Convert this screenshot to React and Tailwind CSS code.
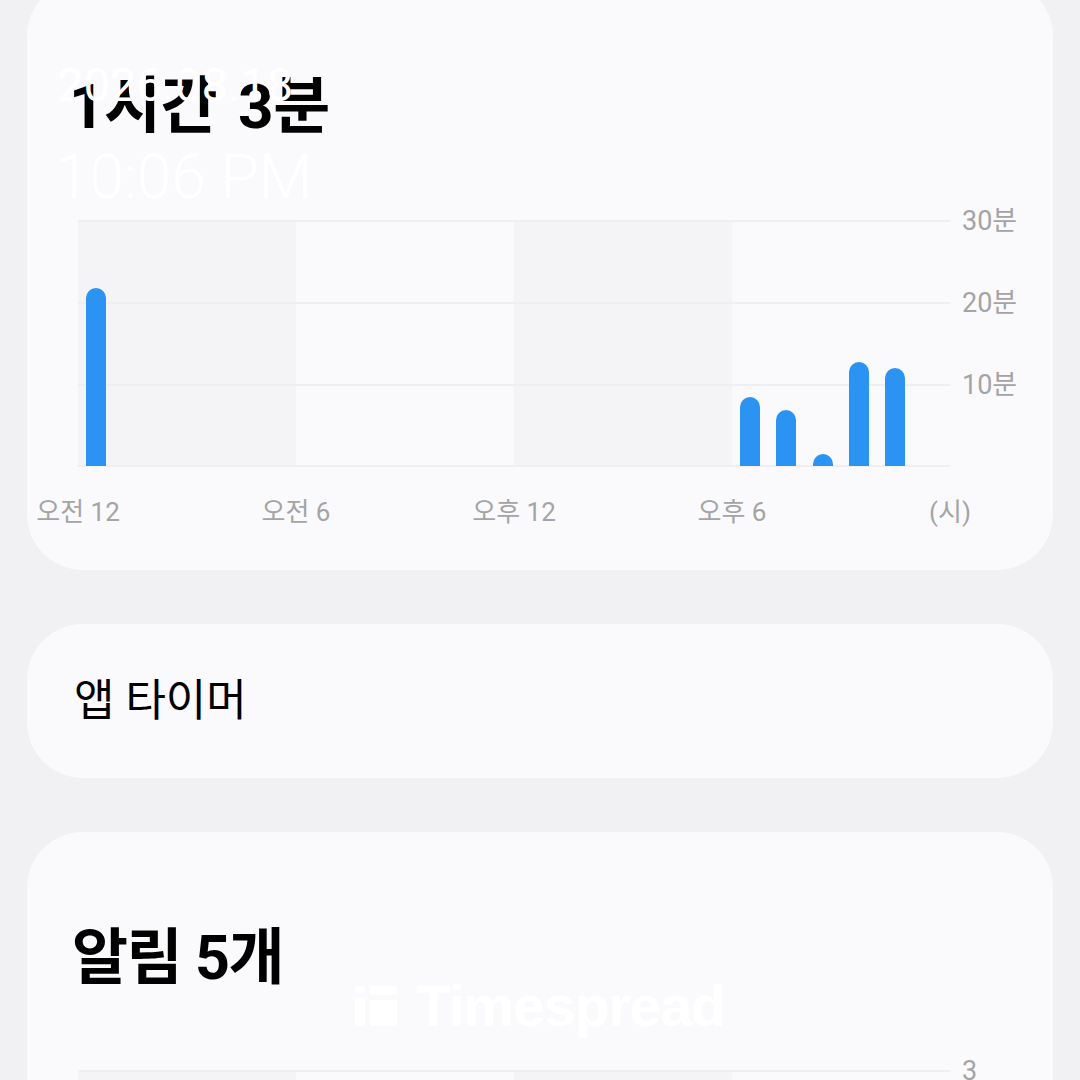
import React from "react";

const FONT = "font-['Roboto','Noto_Sans_CJK_KR',sans-serif]";

const bars1 = { 0: 178, 18: 69, 19: 56, 20: 12, 21: 104, 22: 98 };

function Plot({ height, bars, lines }) {
  const slots = Array.from({ length: 24 }, (_, i) => i);
  return (
    <div className="relative w-[872px]" style={{ height }}>
      <div className="absolute inset-0 flex">
        <div className="flex-1 bg-[#f4f4f6]" />
        <div className="flex-1" />
        <div className="flex-1 bg-[#f4f4f6]" />
        <div className="flex-1" />
      </div>
      {lines.map((t) => (
        <div
          key={t}
          className="absolute left-0 right-0 h-[2px] bg-[#efeff1]"
          style={{ top: t - 1 }}
        />
      ))}
      <div className="absolute inset-0 flex items-end">
        {slots.map((i) => (
          <div key={i} className="flex flex-1 justify-center items-end h-full">
            {bars && bars[i] ? (
              <div
                className="w-[20px] rounded-t-full bg-[#2b93f1]"
                style={{ height: bars[i] }}
              />
            ) : null}
          </div>
        ))}
      </div>
    </div>
  );
}

export default function App() {
  return (
    <div className={`${FONT} relative h-[1080px] w-[1080px] overflow-hidden bg-[#f1f1f3]`}>
      <div className="flex flex-col gap-[54px] px-[27px] mt-[-20px]">
        {/* Card 1 */}
        <div className="relative h-[590px] rounded-[56px] bg-[#fafafc]">
          <div className="pt-[93px] pl-[42px] h-[157px]">
            <div className="text-[62px] leading-[68px] font-bold tracking-[-0.5px] [word-spacing:6px] text-black">
              1시간 3분
            </div>
          </div>
          <div className="mt-[84px] ml-[51px] flex">
            <Plot height={245} bars={bars1} lines={[0, 82, 164, 245]} />
            <div className="relative ml-[12px] h-[245px] w-[70px] text-[27px] leading-[32px] text-[#a4a4a6]">
              <span className="absolute left-0 top-0 -translate-y-1/2">30분</span>
              <span className="absolute left-0 top-[82px] -translate-y-1/2">20분</span>
              <span className="absolute left-0 top-[164px] -translate-y-1/2">10분</span>
            </div>
          </div>
          <div className="relative mt-[30px] ml-[51px] flex w-[872px] text-[26px] leading-[32px] text-[#a4a4a6]">
            <div className="flex-1">
              <span className="inline-block -translate-x-1/2 whitespace-nowrap">오전 12</span>
            </div>
            <div className="flex-1">
              <span className="inline-block -translate-x-1/2 whitespace-nowrap">오전 6</span>
            </div>
            <div className="flex-1">
              <span className="inline-block -translate-x-1/2 whitespace-nowrap">오후 12</span>
            </div>
            <div className="flex-1">
              <span className="inline-block -translate-x-1/2 whitespace-nowrap">오후 6</span>
            </div>
            <span className="absolute right-0 top-0 translate-x-1/2 whitespace-nowrap">(시)</span>
          </div>

          {/* watermark overlay */}
          <div className="absolute left-[30px] top-[77px] text-[47px] leading-[56px] text-white">
            2026.08.18
          </div>
          <div className="absolute left-[28px] top-[161px] text-[62px] leading-[72px] font-light text-white">
            10:06 PM
          </div>
        </div>

        {/* Card 2 */}
        <div className="flex h-[154px] items-center rounded-[56px] bg-[#fafafc] pl-[47px]">
          <span className="text-[44px] leading-[52px] text-black">앱 타이머</span>
        </div>

        {/* Card 3 */}
        <div className="relative h-[400px] rounded-[56px] bg-[#fafafc]">
          <div className="pt-[92px] pl-[45px]">
            <div className="text-[61px] leading-[68px] font-bold tracking-[-1.5px] text-black">
              알림 5개
            </div>
          </div>
          <div className="mt-[79px] ml-[51px] flex">
            <Plot height={200} bars={null} lines={[0]} />
            <div className="relative ml-[12px] h-[200px] w-[70px] text-[27px] leading-[32px] text-[#a4a4a6]">
              <span className="absolute left-0 top-0 -translate-y-1/2">3</span>
            </div>
          </div>

          {/* Timespread watermark */}
          <div className="absolute left-[328px] top-[146px] flex items-center gap-[19px] text-white">
            <svg width="42" height="40" viewBox="0 0 42 40" fill="#ffffff">
              <rect x="0" y="0" width="10" height="7" rx="3" />
              <rect x="0" y="12" width="10" height="28" />
              <rect x="15" y="0" width="27" height="9" />
              <rect x="15" y="14" width="27" height="26" />
            </svg>
            <span className="font-['Liberation_Sans',sans-serif] text-[57px] leading-[56px] font-bold tracking-[-1px]">
              Timespread
            </span>
          </div>
        </div>
      </div>
    </div>
  );
}
